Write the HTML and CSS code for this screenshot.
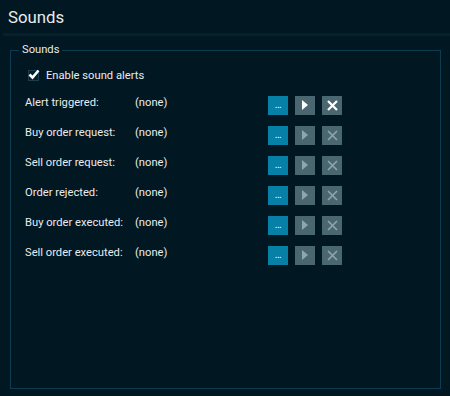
FILE: index.html
```html
<!DOCTYPE html>
<html lang="en">
<head>
  <meta charset="UTF-8" />
  <title>Sounds</title>
  <link rel="stylesheet" href="styles.css">
</head>
<body>

<div class="page-title">Sounds</div>
<div class="title-rule"></div>

<fieldset class="group">
  <legend>Sounds</legend>

  <label class="check-row">
    <span class="checkbox">
      <svg width="12" height="11" viewBox="0 0 12 11"><path d="M1.5 5.5 L4.5 8.5 L10.5 1.5" fill="none" stroke="#fff" stroke-width="2.6"/></svg>
    </span>
    Enable sound alerts
  </label>

  <div class="sound-list">
    <div class="sound-row">
      <span class="sound-name">Alert triggered:</span>
      <span class="sound-file">(none)</span>
      <button class="btn btn-browse">...</button>
      <button class="btn btn-play active"><svg width="8" height="10" viewBox="0 0 8 10"><path d="M1 0 L7 5 L1 10 Z"/></svg></button>
      <button class="btn btn-clear active"><svg width="11" height="11" viewBox="0 0 11 11"><path d="M1 1 L10 10 M10 1 L1 10"/></svg></button>
    </div>
    <div class="sound-row">
      <span class="sound-name">Buy order request:</span>
      <span class="sound-file">(none)</span>
      <button class="btn btn-browse">...</button>
      <button class="btn btn-play"><svg width="8" height="10" viewBox="0 0 8 10"><path d="M1 0 L7 5 L1 10 Z"/></svg></button>
      <button class="btn btn-clear"><svg width="11" height="11" viewBox="0 0 11 11"><path d="M1 1 L10 10 M10 1 L1 10"/></svg></button>
    </div>
    <div class="sound-row">
      <span class="sound-name">Sell order request:</span>
      <span class="sound-file">(none)</span>
      <button class="btn btn-browse">...</button>
      <button class="btn btn-play"><svg width="8" height="10" viewBox="0 0 8 10"><path d="M1 0 L7 5 L1 10 Z"/></svg></button>
      <button class="btn btn-clear"><svg width="11" height="11" viewBox="0 0 11 11"><path d="M1 1 L10 10 M10 1 L1 10"/></svg></button>
    </div>
    <div class="sound-row">
      <span class="sound-name">Order rejected:</span>
      <span class="sound-file">(none)</span>
      <button class="btn btn-browse">...</button>
      <button class="btn btn-play"><svg width="8" height="10" viewBox="0 0 8 10"><path d="M1 0 L7 5 L1 10 Z"/></svg></button>
      <button class="btn btn-clear"><svg width="11" height="11" viewBox="0 0 11 11"><path d="M1 1 L10 10 M10 1 L1 10"/></svg></button>
    </div>
    <div class="sound-row">
      <span class="sound-name">Buy order executed:</span>
      <span class="sound-file">(none)</span>
      <button class="btn btn-browse">...</button>
      <button class="btn btn-play"><svg width="8" height="10" viewBox="0 0 8 10"><path d="M1 0 L7 5 L1 10 Z"/></svg></button>
      <button class="btn btn-clear"><svg width="11" height="11" viewBox="0 0 11 11"><path d="M1 1 L10 10 M10 1 L1 10"/></svg></button>
    </div>
    <div class="sound-row">
      <span class="sound-name">Sell order executed:</span>
      <span class="sound-file">(none)</span>
      <button class="btn btn-browse">...</button>
      <button class="btn btn-play"><svg width="8" height="10" viewBox="0 0 8 10"><path d="M1 0 L7 5 L1 10 Z"/></svg></button>
      <button class="btn btn-clear"><svg width="11" height="11" viewBox="0 0 11 11"><path d="M1 1 L10 10 M10 1 L1 10"/></svg></button>
    </div>
  </div>
</fieldset>

</body>
</html>
```

FILE: styles.css
```css
:root {
  --bg-color: #011722;
  --rule-color: #04212d;
  --border-color: #0d3b52;
  --text-color: #e8ecee;
  --blue-btn: #0780a8;
  --grey-btn: #4a6670;
  --icon-dim: #8ea6ae;
}

* {
  box-sizing: border-box;
  font-family: Roboto, "Liberation Sans", sans-serif;
}

html, body {
  height: 100%;
}

body {
  margin: 0;
  background: var(--bg-color);
  color: var(--text-color);
  font-size: 11.2px;
  display: flex;
  flex-direction: column;
}

.page-title {
  height: 33px;
  padding: 6px 0 0 8px;
  font-size: 16.8px;
  line-height: 22px;
}

.title-rule {
  height: 3px;
  margin-left: 3px;
  background: var(--rule-color);
}

.group {
  flex: 1;
  margin: 7px 9px 7px 10px;
  padding: 0 0 0 14px;
  border: 1px solid var(--border-color);
  min-width: 0;
}

.group legend {
  padding: 0 3px;
  margin-left: -6px;
  line-height: 14px;
}

.check-row {
  display: flex;
  align-items: center;
  gap: 7px;
  margin: 12px 0 0 3px;
  height: 12px;
}

.checkbox {
  width: 11px;
  height: 11px;
  border: 1px solid #1d3e4e;
  background: #02202d;
  display: flex;
  align-items: center;
  justify-content: center;
}

.checkbox svg {
  flex: none;
  margin-top: -1px;
}

.sound-list {
  margin-top: 9px;
}

.sound-row {
  display: flex;
  align-items: center;
  height: 30px;
}

.sound-name {
  width: 110px;
  margin-top: -5px;
}

.sound-file {
  width: 133px;
  margin-top: -5px;
}

.btn {
  width: 20px;
  height: 19px;
  margin: 0 7px 0 0;
  padding: 0;
  border: none;
  background: var(--grey-btn);
  display: flex;
  align-items: center;
  justify-content: center;
}

.btn-browse {
  background: var(--blue-btn);
  color: #fff;
  font-size: 10px;
  line-height: 10px;
  align-items: flex-end;
  padding-bottom: 5px;
  letter-spacing: -0.5px;
}

.btn-play svg path {
  fill: var(--icon-dim);
}

.btn-clear svg path {
  stroke: var(--icon-dim);
  stroke-width: 1.6;
  fill: none;
}

.btn-play.active svg path {
  fill: #fff;
}

.btn-clear.active svg path {
  stroke: #fff;
  stroke-width: 2.2;
}
```
